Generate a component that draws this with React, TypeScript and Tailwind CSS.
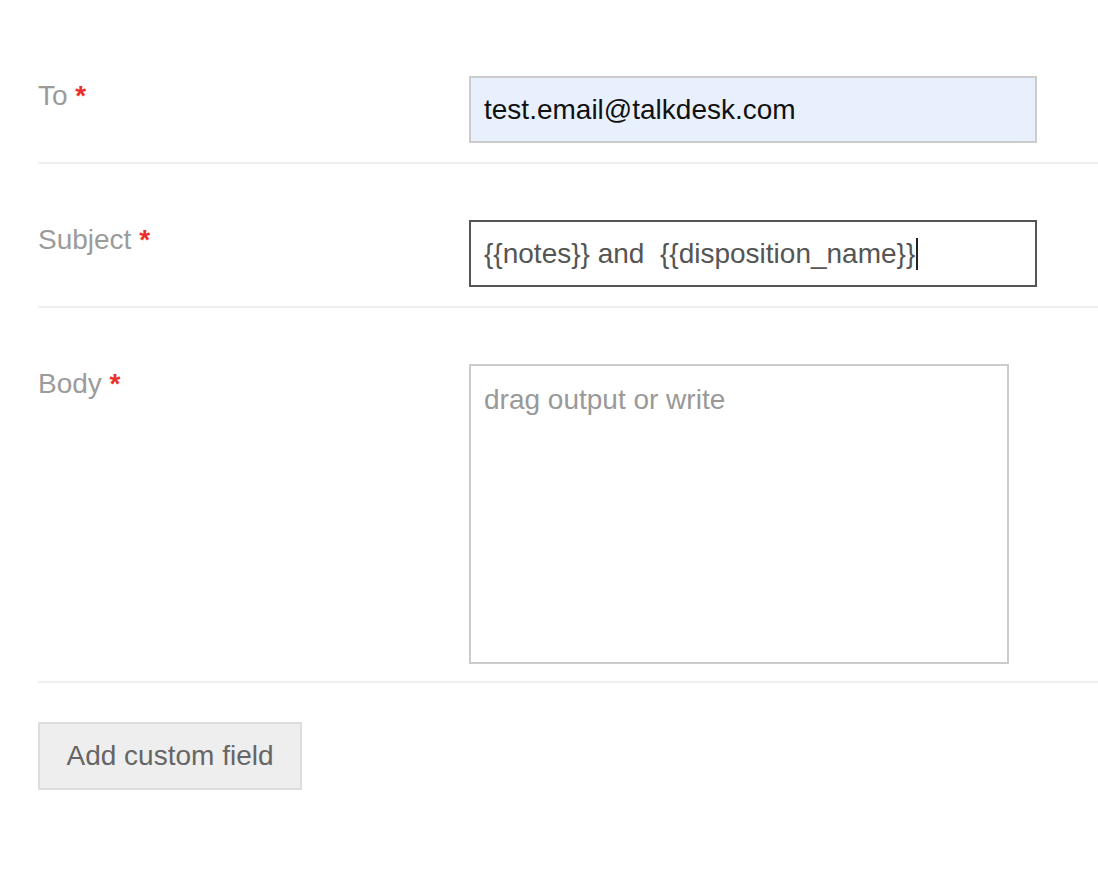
import React from 'react';

function Label({ text }: { text: string }) {
  return (
    <div className="w-[431px] shrink-0 pt-[4px] text-[28px] leading-[32px] text-[#9b9b9b]">
      {text} <span className="font-bold text-[#e8312a]">*</span>
    </div>
  );
}

export default function App() {
  return (
    <div className="min-h-[878px] bg-white pt-[18px] pl-[38px]" style={{ fontFamily: '"Liberation Sans", Arial, sans-serif' }}>
      <div className="flex border-b-2 border-[#f0f0f0] pt-[58px] pb-[19px]">
        <Label text="To" />
        <div className="flex h-[67px] w-[568px] items-center border-2 border-[#cccccc] bg-[#e8f0fe] px-[13px] text-[28px] text-[#111]">
          test.email@talkdesk.com
        </div>
      </div>

      <div className="flex border-b-2 border-[#f0f0f0] pt-[56px] pb-[19px]">
        <Label text="Subject" />
        <div className="flex h-[67px] w-[568px] items-center border-2 border-[#555555] bg-white px-[13px] text-[28px] text-[#555]">
          <span className="whitespace-pre">{'{{notes}} and  {{disposition_name}}'}</span>
          <span className="ml-[1px] h-[32px] w-[2px] bg-[#222]" />
        </div>
      </div>

      <div className="flex border-b-2 border-[#f0f0f0] pt-[56px] pb-[17px]">
        <Label text="Body" />
        <div className="h-[300px] w-[540px] border-2 border-[#cccccc] bg-white px-[13px] pt-[16px] text-[28px] leading-[36px] text-[#999]">
          drag output or write
        </div>
      </div>

      <div className="pt-[39px]">
        <button className="h-[68px] w-[264px] border-2 border-[#dddddd] bg-[#eeeeee] text-[28px] text-[#666]">
          Add custom field
        </button>
      </div>
    </div>
  );
}
